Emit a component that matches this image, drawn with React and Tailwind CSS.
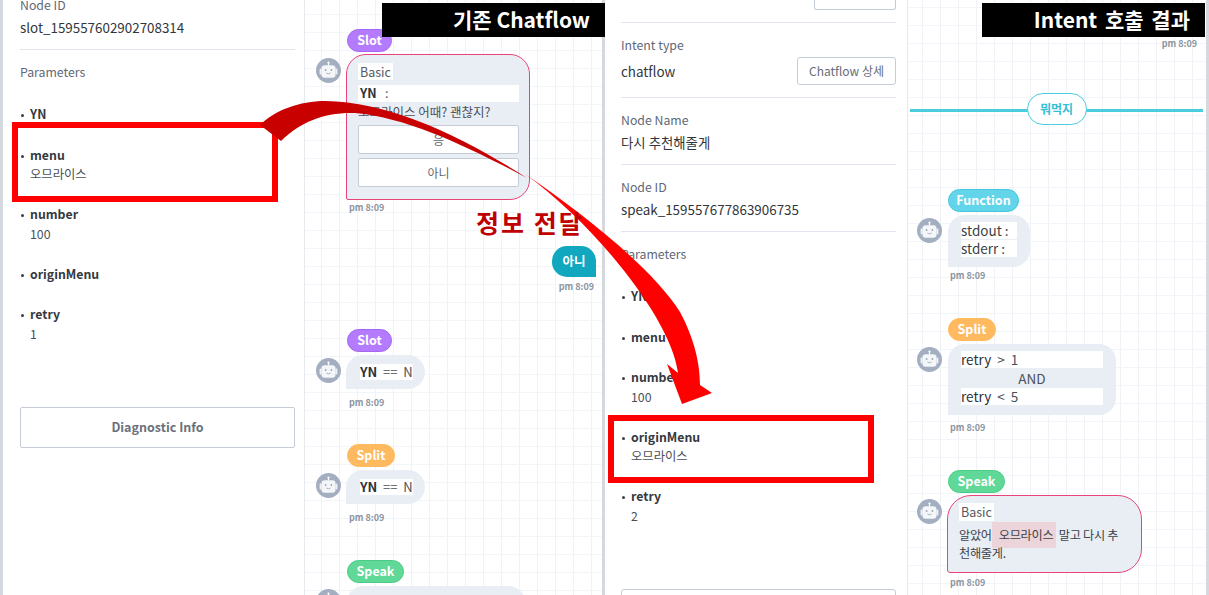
import React from "react";

const BotAvatar = () => (
  <svg width="25" height="25" viewBox="0 0 25 25" className="shrink-0">
    <circle cx="12.5" cy="12.5" r="12.5" fill="#a3afc0" />
    <circle cx="12.5" cy="4.6" r="1.1" fill="#fff" />
    <rect x="11.9" y="4.6" width="1.2" height="3" fill="#fff" />
    <rect x="3.6" y="10.5" width="2" height="6" rx="1" fill="#eef1f5" />
    <rect x="19.4" y="10.5" width="2" height="6" rx="1" fill="#eef1f5" />
    <rect x="5.5" y="7.2" width="14" height="12.5" rx="3.2" fill="#f4f6f9" />
    <circle cx="9.6" cy="12" r="0.9" fill="#98a4b5" />
    <circle cx="15.4" cy="12" r="0.9" fill="#98a4b5" />
    <path d="M10.4 15 Q12.5 16.8 14.6 15" fill="none" stroke="#98a4b5" strokeWidth="0.8" />
  </svg>
);

const Chip = ({ className, children }) => (
  <div className={`h-[23px] rounded-full border flex items-center justify-center text-[12.5px] font-bold text-white ${className}`}>
    {children}
  </div>
);

const Time = ({ className }) => (
  <div className={`text-[9px] leading-[12px] font-bold text-[#8d95a1] ${className}`}>pm 8:09</div>
);

const Message = ({ chip, children, className }) => (
  <div className={`flex flex-col ${className}`}>
    <div className="pl-[31px]">{chip}</div>
    <div className="flex gap-[5px] mt-[3px] items-start">
      <div className="mt-[3px]">
        <BotAvatar />
      </div>
      {children}
    </div>
  </div>
);

const Field = ({ label, value, className = "", valueClassName = "" }) => (
  <div className={`border-b border-[#e1e6ee] ${className}`}>
    <div className="text-[12.3px] leading-[20px] text-[#5f6875]">{label}</div>
    <div className={`text-[13.4px] leading-[24px] text-[#32363c] ${valueClassName}`}>{value}</div>
  </div>
);

const Params = ({ items }) => (
  <div className="flex flex-col gap-5">
    {items.map((item) => (
      <div key={item.name} className="relative pl-[10px]">
        <span className="absolute left-[1px] top-[10px] w-[3px] h-[3px] rounded-full bg-[#3a3f46]" />
        <div className="text-[12.3px] leading-[20.5px] font-bold text-[#343940]">{item.name}</div>
        {item.value && <div className="text-[12.3px] leading-[19px] text-[#4a4f57]">{item.value}</div>}
      </div>
    ))}
  </div>
);

const chatPanel =
  "relative h-full overflow-hidden bg-white bg-[linear-gradient(#f2f5f9_1.5px,transparent_1.5px),linear-gradient(90deg,#eff3f8_1.5px,transparent_1.5px)] bg-[size:18px_18px]";

const Condition = () => (
  <div className="w-[79px] h-[34px] pl-[14px] flex items-center bg-[#e9eef5] rounded-tl-[17px] rounded-tr-[17px] rounded-br-[17px]">
    <div className="bg-white h-[16px] w-[53px] flex items-center text-[13px] text-[#4c5159] whitespace-pre">
      <span className="font-bold text-[#2e3237]">YN</span>
      {"  ==  N"}
    </div>
  </div>
);

export default function App() {
  return (
    <div className="relative w-[1209px] h-[595px] overflow-hidden bg-white flex font-['Noto_Sans_CJK_KR','Noto_Sans',sans-serif]">
      {/* first detail panel */}
      <div className="w-[305px] h-full shrink-0 overflow-hidden border-l-[3px] border-r border-l-[#d5d8de] border-r-[#e6e9ee] pl-[17px] pr-[9px]">
        <div className="-mt-[5px]">
          <Field label="Node ID" value="slot_159557602902708314" className="pb-[10px]" />
          <div className="text-[12.3px] leading-[20px] text-[#5f6875] mt-[12px] mb-[22px]">Parameters</div>
          <Params
            items={[
              { name: "YN" },
              { name: "menu", value: "오므라이스" },
              { name: "number", value: "100" },
              { name: "originMenu" },
              { name: "retry", value: "1" },
            ]}
          />
          <div className="mt-[63px] h-[41px] border border-[#c5ccd8] rounded-[2px] flex items-center justify-center text-[12.5px] font-bold text-[#6a717c]">
            Diagnostic Info
          </div>
        </div>
      </div>

      {/* first chat */}
      <div className={`w-[300px] shrink-0 border-r-[3px] border-r-[#d5d8de] pl-[11px] pr-[6px] pt-[29px] bg-[position:16px_14px] ${chatPanel}`}>
        <Message chip={<Chip className="w-[45px] bg-[#b57bff] border-[#a566f5]">Slot</Chip>}>
          <div className="w-[184px] h-[146px] -mt-[1px] rounded-tl-[20px] rounded-tr-[20px] rounded-br-[20px] rounded-bl-[2px] border-[1.5px] border-[#e8447a] bg-[#e9eef5] pl-[11px] pr-[10px] pt-[8px]">
            <div className="w-fit bg-white px-[2px] text-[12.5px] leading-[17px] text-[#555a62]">Basic</div>
            <div className="bg-white mt-[5px] h-[17px] flex items-center pl-[2px] text-[12.5px] text-[#555a62] whitespace-pre">
              <span className="font-bold text-[#2e3237]">YN</span>
              {"   :"}
            </div>
            <div className="text-[12.5px] leading-[17px] mt-[1px] text-[#4c5159] whitespace-nowrap">오므라이스 어때? 괜찮지?</div>
            <div className="mt-[5px] flex flex-col gap-[4px]">
              <div className="h-[29px] bg-white border border-[#c5ccd8] rounded-[2px] flex items-center justify-center text-[12px] text-[#5f6570]">응</div>
              <div className="h-[29px] bg-white border border-[#c5ccd8] rounded-[2px] flex items-center justify-center text-[12px] text-[#5f6570]">아니</div>
            </div>
          </div>
        </Message>
        <Time className="ml-[33px] mt-[2px]" />
        <div className="flex flex-col items-end mt-[32px]">
          <div className="w-[44px] h-[31px] bg-[#11a7bf] rounded-tl-[15px] rounded-tr-[15px] rounded-bl-[15px] flex items-center justify-center text-[12.5px] font-bold text-white">아니</div>
          <Time className="mt-[4px] pr-[2px]" />
        </div>
        <Message className="mt-[36px]" chip={<Chip className="w-[45px] bg-[#b57bff] border-[#a566f5]">Slot</Chip>}>
          <Condition />
        </Message>
        <Time className="ml-[33px] mt-[8px]" />
        <Message className="mt-[35px]" chip={<Chip className="w-[48px] bg-[#ffb95f] border-[#ffb95f]">Split</Chip>}>
          <Condition />
        </Message>
        <Time className="ml-[33px] mt-[8px]" />
        <Message className="mt-[36px]" chip={<Chip className="w-[57px] bg-[#60d898] border-[#4ccb86]">Speak</Chip>}>
          <div className="w-[180px] h-[60px] bg-[#e9eef5] rounded-t-[18px]" />
        </Message>
      </div>

      {/* second detail panel */}
      <div className="w-[303px] h-full shrink-0 overflow-hidden border-r border-r-[#e6e9ee] pl-[16px] pr-[11px]">
        <div className="flex justify-end">
          <div className="w-[82px] h-[10px] border border-t-0 border-[#c5ccd8] rounded-b-[3px]" />
        </div>
        <div className="h-[13px] border-b border-[#e1e6ee]" />
        <div className="relative">
          <Field label="Intent type" value="chatflow" valueClassName="mt-[4px]" className="pt-[12px] pb-[14px]" />
          <div className="absolute right-0 top-[34px] w-[99px] h-[28px] border-[1.5px] border-[#c5ccd8] rounded-[3px] flex items-center justify-center text-[12px] text-[#666d78]">
            Chatflow 상세
          </div>
        </div>
        <Field label="Node Name" value="다시 추천해줄게" className="pt-[12px] pb-[10px]" />
        <Field label="Node ID" value="speak_159557677863906735" className="pt-[12px] pb-[10px]" />
        <div className="text-[12.3px] leading-[20px] text-[#5f6875] mt-[12px] mb-[22px]">Parameters</div>
        <Params
          items={[
            { name: "YN" },
            { name: "menu" },
            { name: "number", value: "100" },
            { name: "originMenu", value: "오므라이스" },
            { name: "retry", value: "2" },
          ]}
        />
        <div className="mt-[63px] h-[41px] border border-[#c5ccd8] rounded-[3px]" />
      </div>

      {/* second chat */}
      <div className={`flex-1 border-r-[3px] border-r-[#d5d8de] pl-[9px] pr-[9px] pt-[38px] bg-[position:14px_7px] ${chatPanel}`}>
        <Time className="text-right" />
        <div className="relative h-[32px] mt-[43px] -mr-[6px] -ml-[7px] flex items-center justify-center">
          <div className="absolute inset-x-0 top-[16px] h-[3px] bg-[#4bcde0]" />
          <div className="relative w-[60px] h-[32px] bg-white border border-[#4bcde0] rounded-full flex items-center justify-center text-[12px] font-bold text-[#35bfd4]">
            뭐먹지
          </div>
        </div>
        <Message className="mt-[64px]" chip={<Chip className="w-[71px] bg-[#62d5ea] border-[#45c5dc]">Function</Chip>}>
          <div className="w-[82px] h-[52px] rounded-tl-[17px] rounded-tr-[17px] rounded-br-[17px] bg-[#e9eef5] px-[13px] pt-[7px] flex flex-col gap-px ml-px">
            <div className="bg-white h-[17px] text-[13.5px] leading-[17px] text-[#3a3f46] whitespace-pre">stdout :</div>
            <div className="bg-white h-[17px] text-[13.5px] leading-[17px] text-[#3a3f46] whitespace-pre">stderr :</div>
          </div>
        </Message>
        <Time className="ml-[33px] mt-[3px]" />
        <Message className="mt-[36px]" chip={<Chip className="w-[48px] bg-[#ffb95f] border-[#ffb95f]">Split</Chip>}>
          <div className="w-[168px] h-[71px] rounded-tl-[17px] rounded-tr-[17px] rounded-br-[17px] bg-[#e9eef5] px-[13px] pt-[7px] text-[13.5px] leading-[17px] text-[#4c5159] ml-px">
            <div className="bg-white h-[17px] whitespace-pre"><span className="text-[#2e3237]">retry</span>{"  >  1"}</div>
            <div className="h-[20px] leading-[20px] text-center">AND</div>
            <div className="bg-white h-[17px] whitespace-pre"><span className="text-[#2e3237]">retry</span>{"  <  5"}</div>
          </div>
        </Message>
        <Time className="ml-[33px] mt-[7px]" />
        <Message className="mt-[36px]" chip={<Chip className="w-[57px] bg-[#60d898] border-[#4ccb86]">Speak</Chip>}>
          <div className="w-[195px] h-[78px] -mt-[1px] rounded-tl-[24px] rounded-tr-[24px] rounded-br-[24px] rounded-bl-[3px] border-[1.5px] border-[#e8447a] bg-[#e9eef5] pl-[11px] pt-[7px]">
            <div className="w-fit bg-white px-[2px] text-[12.5px] leading-[18px] text-[#555a62]">Basic</div>
            <div className="text-[12.2px] leading-[18px] tracking-[-0.3px] mt-[5px] text-[#3d4249]">
              알았어<span className="bg-[#ecd5da] pl-[7px] pr-[3px] py-[4px]">오므라이스</span> 말고 다시 추<br />천해줄게.
            </div>
          </div>
        </Message>
        <Time className="ml-[33px] mt-[4px]" />
      </div>

      {/* annotations on top of the screenshots */}
      <div className="absolute left-[12px] top-[122px] w-[266px] h-[80px] border-[6px] border-[#ff0000]" />
      <div className="absolute left-[608px] top-[415px] w-[266px] h-[68px] border-[6px] border-[#ff0000]" />

      <svg width="1209" height="595" viewBox="0 0 1209 595" className="absolute left-0 top-0 pointer-events-none">
        <path d="M260 125 C 275 110 300 101 325 101 C 390 102 460 135 527 178 C 470 148 410 118 355 113 C 325 112 300 122 281 141 Z" fill="#c80000" />
        <path d="M525 174 C 590 218 655 272 680 312 C 695 340 700 365 700 385 L 712 393 L 682 404 L 667 364 L 678 373 C 675 350 660 320 637 288 C 610 250 568 205 525 174 Z" fill="#ff0000" />
      </svg>

      <div className="absolute left-[476px] top-[205px] text-[25px] leading-[34px] font-bold tracking-[2px] text-[#c00000] whitespace-pre">정보 전달</div>
      <div className="absolute left-[382px] top-[3px] w-[223px] h-[34px] pb-[1px] bg-black flex items-center justify-end pr-[15px] text-[21px] font-bold text-white whitespace-pre">기존 Chatflow</div>
      <div className="absolute left-[982px] top-[3px] w-[223px] h-[34px] pb-[1px] bg-black flex items-center justify-end pr-[15px] text-[21px] font-bold text-white whitespace-pre [word-spacing:3px]">Intent 호출 결과</div>
    </div>
  );
}
